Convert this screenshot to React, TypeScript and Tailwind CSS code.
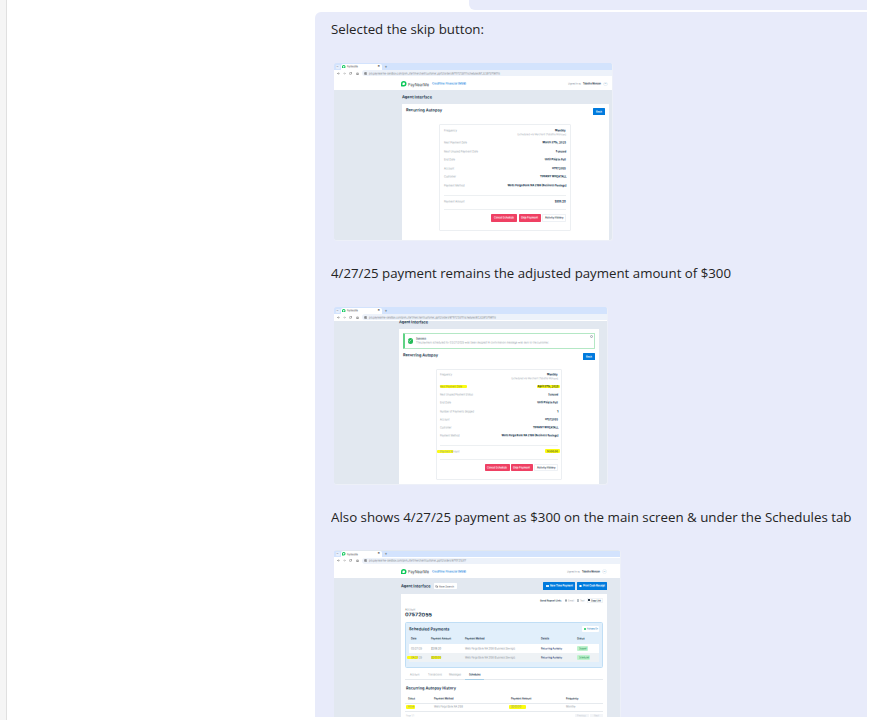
import { useLayoutEffect, useRef, type ReactNode } from "react";
import { ArrowLeft, ArrowRight, House, RotateCw, SlidersHorizontal, Search, Check, X } from "lucide-react";

/** One line of text, stretched to the width that its class gives. Thumbnail text gets smooth sub-pixel placement. */
function Fit({ c, right, caption, children }: { c: string; right?: boolean; caption?: boolean; children: ReactNode }) {
  const inner = useRef<HTMLSpanElement>(null);
  useLayoutEffect(() => {
    const el = inner.current;
    if (!el || !el.parentElement) return;
    el.style.transform = "none";
    const scale = el.parentElement.getBoundingClientRect().width / el.getBoundingClientRect().width;
    el.style.transform = caption ? `scaleX(${scale})` : `translateY(0.4px) rotate(0.06deg) scale(${scale}, 0.96)`;
  }, [caption]);
  return (
    <span className={`flex shrink-0 leading-none whitespace-nowrap ${right ? "justify-end" : ""} ${c}`}>
      <span ref={inner} className={`inline-block shrink-0 ${right ? "origin-right" : "origin-left"}`}>
        {children}
      </span>
    </span>
  );
}

function Logo({ c }: { c: string }) {
  return (
    <svg viewBox="0 0 12 12" className={`shrink-0 ${c}`}>
      <path d="M6 0a6 6 0 0 1 0 12H1a1 1 0 0 1-1-1V6a6 6 0 0 1 6-6z" fill="#0cc759" />
      <path d="M6 3.2a2.8 2.8 0 0 1 0 5.6H3.2V6A2.8 2.8 0 0 1 6 3.2z" fill="#fff" />
    </svg>
  );
}

function Browser({ url, urlW, bar }: { url: string; urlW: string; bar: string }) {
  return (
    <>
      <div className="flex h-[6.5px] shrink-0 items-end bg-[#d3e3fd] pl-[1.5px]">
        <span className="mb-[1px] h-[4px] w-[4px] rounded-[1px] bg-[#e6effd] text-center text-[3px] leading-[3px] text-[#556]">⌄</span>
        <div className="ml-[1px] flex h-[5.7px] w-[41px] items-center rounded-t-[2px] bg-white pl-[1.5px]">
          <Logo c="h-[3.5px] w-[3.5px]" />
          <Fit c="ml-[1px] w-[11px] text-[3.2px] text-[#444]">PayNearMe</Fit>
          <span className="ml-auto pr-[1.5px] text-[3.6px] leading-none font-bold text-[#333]">×</span>
        </div>
        <span className="ml-[3px] text-[4.4px] leading-[6px] text-[#445]">+</span>
      </div>
      <div className={`flex shrink-0 items-center bg-white pl-[2.5px] text-[#555] ${bar}`}>
        <ArrowLeft className="h-[3px] w-[3px]" strokeWidth={3} />
        <ArrowRight className="ml-[3.6px] h-[3px] w-[3px] text-[#999]" strokeWidth={3} />
        <RotateCw className="ml-[3.4px] h-[3px] w-[3px]" strokeWidth={3} />
        <House className="ml-[3.4px] h-[3px] w-[3px]" strokeWidth={3} />
        <div className="ml-[3.5px] flex h-[5.6px] grow items-center rounded-l-[3px] bg-[#edf2fa] pl-[1.5px]">
          <SlidersHorizontal className="mr-[1.8px] h-[3px] w-[3px]" strokeWidth={3} />
          <Fit c={`text-[3.3px] text-[#6a6f78] ${urlW}`}>{url}</Fit>
        </div>
      </div>
    </>
  );
}

function SiteHeader({ c, gap }: { c: string; gap: string }) {
  return (
    <div className={`flex shrink-0 items-center bg-white ${c}`}>
      <Logo c="h-[5.5px] w-[5.5px]" />
      <Fit c="ml-[1.2px] w-[21px] text-[4.8px] text-[#333b44]">PayNearMe</Fit>
      <Fit c="ml-[3.5px] w-[34px] text-[3.3px] font-semibold text-[#1583e0]">Creditline Financial (MSB)</Fit>
      <Fit c={`w-[13px] text-[3px] text-[#7d8792] ${gap}`}>Signed in as</Fit>
      <Fit c="ml-[1.5px] w-[18px] text-[3.2px] font-bold text-[#2c3d4f]">Tabatha Monson</Fit>
      <span className="ml-[2.5px] flex h-[4.6px] w-[4.6px] items-center justify-center rounded-full border-[0.5px] border-[#edf3f8] text-[3px] leading-none text-[#48a]">⌄</span>
    </div>
  );
}

type RowData = { l: string; lw: string; r: string; rw: string; h: string };

function Row({ d }: { d: RowData }) {
  return (
    <div className={`flex shrink-0 items-center justify-between ${d.h}`}>
      <Fit c={`text-[3.2px] text-[#8d98a3] ${d.lw}`}>{d.l}</Fit>
      <Fit right c={`text-[3.3px] font-extrabold text-[#1d3a53] ${d.rw}`}>{d.r}</Fit>
    </div>
  );
}

function PanelButtons({ a, b, c }: { a: string; b: string; c: string }) {
  return (
    <div className="mt-[4px] flex shrink-0 justify-end gap-[1.3px]">
      <div className={`flex items-center justify-center rounded-[0.7px] bg-[#ef4063] ${a}`}>
        <Fit c="w-[20px] text-[3.2px] font-semibold text-white">Cancel Schedule</Fit>
      </div>
      <div className={`flex items-center justify-center rounded-[0.7px] bg-[#ef4063] ${b}`}>
        <Fit c="w-[17px] text-[3.2px] font-semibold text-white">Skip Payment</Fit>
      </div>
      <div className={`flex items-center justify-center rounded-[0.7px] border border-[#eef1f5] bg-white ${c}`}>
        <Fit c="w-[18.5px] text-[3.1px] font-bold text-[#44505c]">Activity History</Fit>
      </div>
    </div>
  );
}

const first: RowData[] = [
  { l: "Next Payment Date", lw: "w-[23px]", r: "March 27th, 2025", rw: "w-[23.5px]", h: "h-[8.6px]" },
  { l: "Next Unused Payment Date", lw: "w-[34px]", r: "5 unused", rw: "w-[10.5px]", h: "h-[8.6px]" },
  { l: "End Date", lw: "w-[11px]", r: "Until Paid in Full", rw: "w-[21px]", h: "h-[8.6px]" },
  { l: "Account", lw: "w-[10px]", r: "07572055", rw: "w-[14px]", h: "h-[8.6px]" },
  { l: "Customer", lw: "w-[12px]", r: "TIFFANY WHEATALL", rw: "w-[26.5px]", h: "h-[8.6px]" },
  { l: "Payment Method", lw: "w-[20.5px]", r: "Wells Fargo Bank NA 2186 (Business Savings)", rw: "w-[59px]", h: "h-[8.6px]" },
];

const second: RowData[] = [
  { l: "Next Unused Payment Status", lw: "w-[33px]", r: "5 unused", rw: "w-[10px]", h: "h-[8.2px]" },
  { l: "End Date", lw: "w-[11px]", r: "Until Paid in Full", rw: "w-[20.5px]", h: "h-[8.2px]" },
  { l: "Number of Payments Skipped", lw: "w-[34px]", r: "1", rw: "w-[1.5px]", h: "h-[8.2px]" },
  { l: "Account", lw: "w-[9.5px]", r: "07572055", rw: "w-[13px]", h: "h-[8.3px]" },
  { l: "Customer", lw: "w-[11.5px]", r: "TIFFANY WHEATALL", rw: "w-[25.5px]", h: "h-[8.3px]" },
  { l: "Payment Method", lw: "w-[19.5px]", r: "Wells Fargo Bank NA 2186 (Business Savings)", rw: "w-[57px]", h: "h-[8.3px]" },
];

function ShotOne() {
  return (
    <div className="flex h-[178px] w-[279px] flex-col overflow-hidden rounded-[3px] border-r-[1.5px] border-b-[1.5px] border-[#edf0f8] bg-[#e2e8f0]">
      <Browser bar="h-[7.5px]" urlW="w-[131px]" url="pro.paynearme-sandbox.com/pnm_start/merchant/customer_pp02/orders/87107213317/schedules/87_32397370801/s" />
      <SiteHeader c="h-[13px] pt-[0.8px] pl-[67px]" gap="ml-[102px]" />
      <div className="flex h-[14px] shrink-0 items-center pl-[67.5px]">
        <Fit c="w-[30px] text-[4.3px] font-bold text-[#24384e]">Agent Interface</Fit>
      </div>
      <div className="mr-[3.5px] ml-[67.5px] flex grow flex-col bg-white pt-[3.4px] pr-[4px] pl-[4px]">
        <div className="flex h-[8px] items-center justify-between">
          <Fit c="mb-[1.5px] w-[36px] text-[4.4px] font-bold text-[#24384e]">Recurring Autopay</Fit>
          <div className="flex h-[7.4px] w-[12px] items-center justify-center rounded-[0.6px] bg-[#007add]">
            <Fit c="w-[6px] text-[3px] font-bold text-white">Back</Fit>
          </div>
        </div>
        <div className="mt-[8.3px] ml-[33.5px] flex h-[107px] w-[131.5px] flex-col rounded-[1px] border border-[#eceff2] px-[3.5px] pt-[3px]">
          <div className="flex h-[5px] items-center justify-between">
            <Fit c="w-[13px] text-[3.2px] text-[#8d98a3]">Frequency</Fit>
            <Fit right c="w-[10.5px] text-[3.3px] font-extrabold text-[#1d3a53]">Monthly</Fit>
          </div>
          <div className="flex h-[5.6px] items-start justify-end">
            <Fit right c="w-[49px] text-[3px] text-[#98a2ad]">(Scheduled via Merchant (Tabatha Monson)</Fit>
          </div>
          {first.map((d) => <Row key={d.l} d={d} />)}
          <div className="mt-[4.8px] flex h-[15.5px] shrink-0 items-center justify-between border-y border-[#edf0f2]">
            <Fit c="mb-[2px] w-[20.5px] text-[3.2px] text-[#8d98a3]">Payment Amount</Fit>
            <Fit right c="mb-[2px] w-[11px] text-[3.4px] font-extrabold text-[#1d3a53]">$306.20</Fit>
          </div>
          <PanelButtons a="h-[7.5px] w-[26px]" b="h-[7.5px] w-[22px]" c="h-[7.5px] w-[24px]" />
        </div>
      </div>
    </div>
  );
}

function ShotTwo() {
  return (
    <div className="flex h-[178px] w-[274px] flex-col overflow-hidden rounded-[3px] border-r-[1.5px] border-b-[1px] border-[#edf0f8] bg-[#e2e8f0]">
      <Browser bar="h-[7.5px]" urlW="w-[127px]" url="pro.paynearme-sandbox.com/pnm_start/merchant/customer_pp02/orders/87107213317/schedules/87_32397370801/s" />
      <div className="flex h-[8px] shrink-0 items-start pl-[65px]">
        <Fit c="-mt-[0.6px] w-[29px] text-[4.1px] font-bold text-[#24384e]">Agent Interface</Fit>
      </div>
      <div className="mr-[8px] ml-[65px] flex grow flex-col bg-white pt-[4px] pr-[4px] pl-[4px]">
        <div className="flex h-[16px] items-start rounded-[1px] border border-l-2 border-[#b4e8c5] border-l-[#5fd284] bg-white pt-[3.2px] pr-[1px] pl-[2.5px]">
          <span className="mt-[1.2px] flex h-[5.4px] w-[5.4px] shrink-0 items-center justify-center rounded-full bg-[#25bb59]">
            <Check className="h-[3.6px] w-[3.6px] text-white" strokeWidth={4} />
          </span>
          <div className="ml-[3.3px] flex flex-col gap-[1px]">
            <Fit c="w-[10px] text-[3.3px] font-bold text-[#2c3d4f]">Success</Fit>
            <Fit c="w-[133px] text-[3.1px] text-[#8b959e]">The payment scheduled for 03/27/2025 was been skipped! A confirmation message was sent to the customer.</Fit>
          </div>
          <span className="-mt-[2px] ml-auto flex h-[3.2px] w-[3.2px] items-center justify-center rounded-full border-[0.5px] border-[#a5adb5]">
            <X className="h-[2px] w-[2px] text-[#888]" />
          </span>
        </div>
        <div className="mt-[4px] flex h-[7px] items-center justify-between">
          <Fit c="mb-[2px] w-[35px] text-[4.3px] font-bold text-[#24384e]">Recurring Autopay</Fit>
          <div className="flex h-[7px] w-[12px] items-center justify-center rounded-[0.6px] bg-[#007add]">
            <Fit c="w-[6px] text-[3px] font-bold text-white">Back</Fit>
          </div>
        </div>
        <div className="mt-[8.5px] ml-[33px] flex h-[111.5px] w-[126px] flex-col rounded-[1px] border border-[#eceff2] px-[3px] pt-[2.3px]">
          <div className="flex h-[5px] items-center justify-between">
            <Fit c="w-[12px] text-[3.2px] text-[#8d98a3]">Frequency</Fit>
            <Fit right c="w-[10.5px] text-[3.3px] font-extrabold text-[#1d3a53]">Monthly</Fit>
          </div>
          <div className="flex h-[5.5px] items-start justify-end">
            <Fit right c="w-[47px] text-[3px] text-[#98a2ad]">(Scheduled via Merchant (Tabatha Monson)</Fit>
          </div>
          <div className="-mr-[2px] flex h-[8.4px] shrink-0 items-center justify-between">
            <div className="flex h-[3.5px] w-[27px] items-center rounded-[1px] bg-[#fbfb12]">
              <Fit c="w-[22px] text-[3.2px] text-[#8c8c3a]">Next Payment Date</Fit>
            </div>
            <div className="flex h-[3.5px] w-[23px] items-center justify-end rounded-[1px] bg-[#fbfb12] pr-[2px]">
              <Fit right c="w-[21px] text-[3.3px] font-extrabold text-[#3f4c20]">April 27th, 2025</Fit>
            </div>
          </div>
          {second.map((d) => <Row key={d.l} d={d} />)}
          <div className="mt-[4.6px] flex h-[15px] shrink-0 items-center justify-between border-y border-[#edf0f2]">
            <div className="mb-[2px] -ml-[3px] flex h-[3.3px] items-center rounded-[1px] bg-linear-to-r from-[#fbfb12] from-70% to-transparent to-70% pl-[3px]">
              <Fit c="w-[19.5px] text-[3.2px] text-[#8d98a3]">Payment Amount</Fit>
            </div>
            <div className="-mr-[2px] mb-[2px] flex h-[3.5px] w-[15px] items-center justify-end rounded-[1px] bg-[#fbfb12] pr-[2px]">
              <Fit right c="w-[11px] text-[3.3px] font-bold text-[#4c5a20]">$300.00</Fit>
            </div>
          </div>
          <PanelButtons a="h-[7px] w-[25px]" b="h-[7px] w-[21.5px]" c="h-[7px] w-[24px]" />
        </div>
      </div>
    </div>
  );
}

function Payment({ hl, date, amount, status, sc }: { hl: boolean; date: string; amount: string; status: string; sc: string }) {
  return (
    <div className={`grid h-[9px] grid-cols-[20px_33.5px_76.5px_36px_20px] items-center pl-[2px] text-[3.1px] ${hl ? "bg-[#eef2f5]" : "bg-white"}`}>
      <div className={hl ? "-ml-[4px] w-[11px] rounded-[1px] bg-[#fbfb12] pl-[4px]" : ""}>
        <Fit c="w-[11px] text-[#78828c]">{date}</Fit>
      </div>
      <Fit c={`w-[10px] text-[#5e6870] ${hl ? "rounded-[1px] bg-[#fbfb12]" : ""}`}>{amount}</Fit>
      <Fit c="w-[50px] text-[#78828c]">Wells Fargo Bank NA 2186 (Business Savings)</Fit>
      <Fit c="w-[21px] font-semibold text-[#3a4c78]">Recurring Autopay</Fit>
      <div className={`flex h-[5px] items-center justify-center rounded-[1px] bg-[#bff3cf] ${sc}`}>
        <Fit c={`font-medium text-[#25944f] ${hl ? "w-[10px]" : "w-[7.5px]"}`}>{status}</Fit>
      </div>
    </div>
  );
}

function ShotThree() {
  return (
    <div className="flex h-[167px] w-[287px] flex-col overflow-hidden rounded-t-[3px] border-r border-[#edf0f8] bg-[#e2e8f0] pt-[0.5px]">
      <Browser bar="h-[7.5px]" urlW="w-[97px]" url="pro.paynearme-sandbox.com/pnm_start/merchant/customer_pp02/orders/87107213317" />
      <SiteHeader c="h-[13.5px] pl-[67px]" gap="ml-[101px]" />
      <div className="flex h-[16px] shrink-0 items-center pr-[13px] pl-[67px]">
        <Fit c="w-[29.5px] text-[4.3px] font-bold text-[#24384e]">Agent Interface</Fit>
        <div className="ml-[3px] flex h-[6px] w-[23px] items-center gap-[1px] rounded-[0.7px] bg-white pl-[1.5px]">
          <Search className="h-[3px] w-[3px] text-[#556]" strokeWidth={3} />
          <Fit c="w-[15px] text-[3px] font-medium text-[#5a646e]">New Search</Fit>
        </div>
        <div className="ml-auto flex h-[7.5px] w-[32px] items-center justify-center gap-[1px] rounded-[0.6px] bg-[#007add]">
          <span className="h-[2.5px] w-[3px] bg-[#d6ebfb]" />
          <Fit c="w-[23px] text-[3.2px] font-bold text-white">New Time Payment</Fit>
        </div>
        <div className="ml-[1.7px] flex h-[7.5px] w-[30px] items-center justify-center gap-[1px] rounded-[0.6px] bg-[#007add]">
          <span className="h-[2.5px] w-[2.5px] rounded-full border-[0.6px] border-white" />
          <Fit c="w-[22px] text-[3.2px] font-bold text-white">Print Cash Receipt</Fit>
        </div>
      </div>
      <div className="mr-[13px] ml-[67px] flex shrink-0 flex-col bg-white pt-[3.5px] pr-[4px] pl-[4px]">
        <div className="flex h-[6px] items-center justify-end text-[3px] text-[#9aa3ab]">
          <Fit c="w-[21.5px] font-bold text-[#2c3d4f]">Send Repeat Link:</Fit>
          <span className="ml-[3px] h-[2.5px] w-[2.5px] rounded-full border-[0.5px] border-[#9aa3ab]" />
          <Fit c="ml-[0.7px] w-[6px]">Email</Fit>
          <span className="ml-[3px] h-[2.4px] w-[2.5px] bg-[#b6bdc4]" />
          <Fit c="ml-[0.7px] w-[4.5px]">Text</Fit>
          <div className="ml-[2px] flex h-[5.4px] w-[16.5px] items-center justify-center gap-[0.8px] border border-[#f0f3f6]">
            <span className="h-[2px] w-[2px] bg-[#33404d]" />
            <Fit c="w-[10px] font-bold text-[#33404d]">Copy Link</Fit>
          </div>
        </div>
        <Fit c="mt-[4.5px] h-[3.5px] w-[10.5px] text-[3.1px] text-[#7d8792]">Account</Fit>
        <Fit c="mt-[0.5px] h-[6px] w-[27px] text-[5.2px] font-bold text-[#24384e]">07572055</Fit>
        <div className="mt-[4px] h-[45.5px] rounded-[1.5px] border border-[#c0def5] bg-[#e1effb] px-[3px] pt-[3px]">
          <div className="flex h-[6px] items-center justify-between">
            <Fit c="w-[40.5px] text-[4.3px] font-bold text-[#24384e]">Scheduled Payments</Fit>
            <div className="flex h-[5.4px] w-[17px] items-center justify-center gap-[1px] rounded-[1px] bg-white">
              <span className="h-[2px] w-[2px] rounded-full bg-[#12c959]" />
              <Fit c="w-[11px] text-[3px] font-medium text-[#2a7cc0]">Autopay On</Fit>
            </div>
          </div>
          <div className="grid h-[12px] grid-cols-[20px_33.5px_76.5px_36px_20px] items-center pt-[2px] pl-[2px] text-[3.1px] font-bold text-[#2c3d4f]">
            <Fit c="w-[5.5px]">Date</Fit>
            <Fit c="w-[20px]">Payment Amount</Fit>
            <Fit c="w-[19.5px]">Payment Method</Fit>
            <Fit c="w-[8px]">Details</Fit>
            <Fit c="w-[7.5px]">Status</Fit>
          </div>
          <Payment hl={false} date="03/27/25" amount="$306.20" status="Skipped" sc="w-[10.5px]" />
          <Payment hl date="04/27/25" amount="$300.00" status="Scheduled" sc="w-[13px]" />
        </div>
        <div className="mt-[3.5px] flex h-[9px] shrink-0 items-stretch border-b border-[#e6eaee] text-[3.1px] text-[#8b959e]">
          <Fit c="mt-[2.4px] ml-[5px] w-[9.5px]">Account</Fit>
          <Fit c="mt-[2.4px] ml-[8px] w-[14px]">Transactions</Fit>
          <Fit c="mt-[2.4px] ml-[7px] w-[12px]">Messages</Fit>
          <div className="-mb-px ml-[4.5px] flex w-[19px] justify-center border-b border-[#a9cfe6] pt-[2.4px]">
            <Fit c="w-[11.5px] font-bold text-[#24384e]">Schedules</Fit>
          </div>
        </div>
        <Fit c="mt-[6px] ml-[0.5px] h-[6px] w-[50px] text-[4.4px] font-bold text-[#24384e]">Recurring Autopay History</Fit>
        <div className="mt-[3.5px] grid h-[8px] grid-cols-[26px_77px_55px_30px] items-center border-b border-[#e6eaee] pl-[3px] text-[3.1px] font-bold text-[#33424f]">
          <Fit c="w-[7px]">Status</Fit>
          <Fit c="w-[19.5px]">Payment Method</Fit>
          <Fit c="w-[20.5px]">Payment Amount</Fit>
          <Fit c="w-[12.5px]">Frequency</Fit>
        </div>
        <div className="grid h-[8px] grid-cols-[26px_77px_55px_30px] items-center border-b border-[#e6eaee] pl-[3px] text-[3.1px] text-[#7d8792]">
          <div className="-ml-[2px] w-[9px] rounded-[1px] bg-[#fbfb12] pl-[2px]"><Fit c="w-[6px]">Active</Fit></div>
          <Fit c="w-[29px]">Wells Fargo Bank NA 2186</Fit>
          <div className="-ml-[2px] w-[17px] rounded-[1px] bg-[#fbfb12] pl-[2px]"><Fit c="w-[10px]">$300.00</Fit></div>
          <Fit c="w-[9.5px]">Monthly</Fit>
        </div>
        <div className="flex h-[10px] shrink-0 items-start justify-end gap-[1px] pt-[2px] text-[3px] text-[#c3c9cf]">
          <Fit c="mt-[0.8px] mr-auto ml-[1px] w-[8px]">Page 1/1</Fit>
          <div className="flex h-[6px] w-[13.5px] justify-center bg-[#f3f5f8] pt-[0.8px]"><Fit c="w-[9px]">Previous</Fit></div>
          <div className="flex h-[6px] w-[13.5px] justify-center bg-[#f3f5f8] pt-[0.8px]"><Fit c="w-[5px]">Next</Fit></div>
        </div>
      </div>
    </div>
  );
}

export default function App() {
  return (
    <div className="flex h-[720px] w-[886px] overflow-hidden bg-white font-['Inter',sans-serif]">
      <div className="w-[7px] shrink-0 border-r border-[#e0e0e0] bg-[#f5f5f5]" />
      <div className="ml-[308px] flex w-[552px] flex-col">
        <div className="ml-[154px] h-[10px] shrink-0 rounded-bl-[6px] bg-[#e8ebfa]" />
        <div className="mt-[2px] flex h-[705px] shrink-0 flex-col overflow-hidden rounded-tl-[6px] bg-[#e8ebfa] font-['Open_Sans','Noto_Sans',sans-serif] text-[13.5px] text-[#242424]">
          <div className="flex h-[51px] shrink-0 pt-[11px] pl-[15.5px]">
            <Fit caption c="w-[153px]">Selected the skip button:</Fit>
          </div>
          <div className="h-[178px] shrink-0 pl-[19px] font-['Inter',sans-serif]"><ShotOne /></div>
          <div className="flex h-[66px] shrink-0 pt-[26px] pl-[15.5px]">
            <Fit caption c="w-[400px]">4/27/25 payment remains the adjusted payment amount of $300</Fit>
          </div>
          <div className="h-[178px] shrink-0 pl-[19px] font-['Inter',sans-serif]"><ShotTwo /></div>
          <div className="flex h-[65px] shrink-0 pt-[26px] pl-[15.5px]">
            <Fit caption c="w-[520.5px]">Also shows 4/27/25 payment as $300 on the main screen &amp; under the Schedules tab</Fit>
          </div>
          <div className="h-[167px] shrink-0 pl-[19px] font-['Inter',sans-serif]"><ShotThree /></div>
        </div>
      </div>
    </div>
  );
}
